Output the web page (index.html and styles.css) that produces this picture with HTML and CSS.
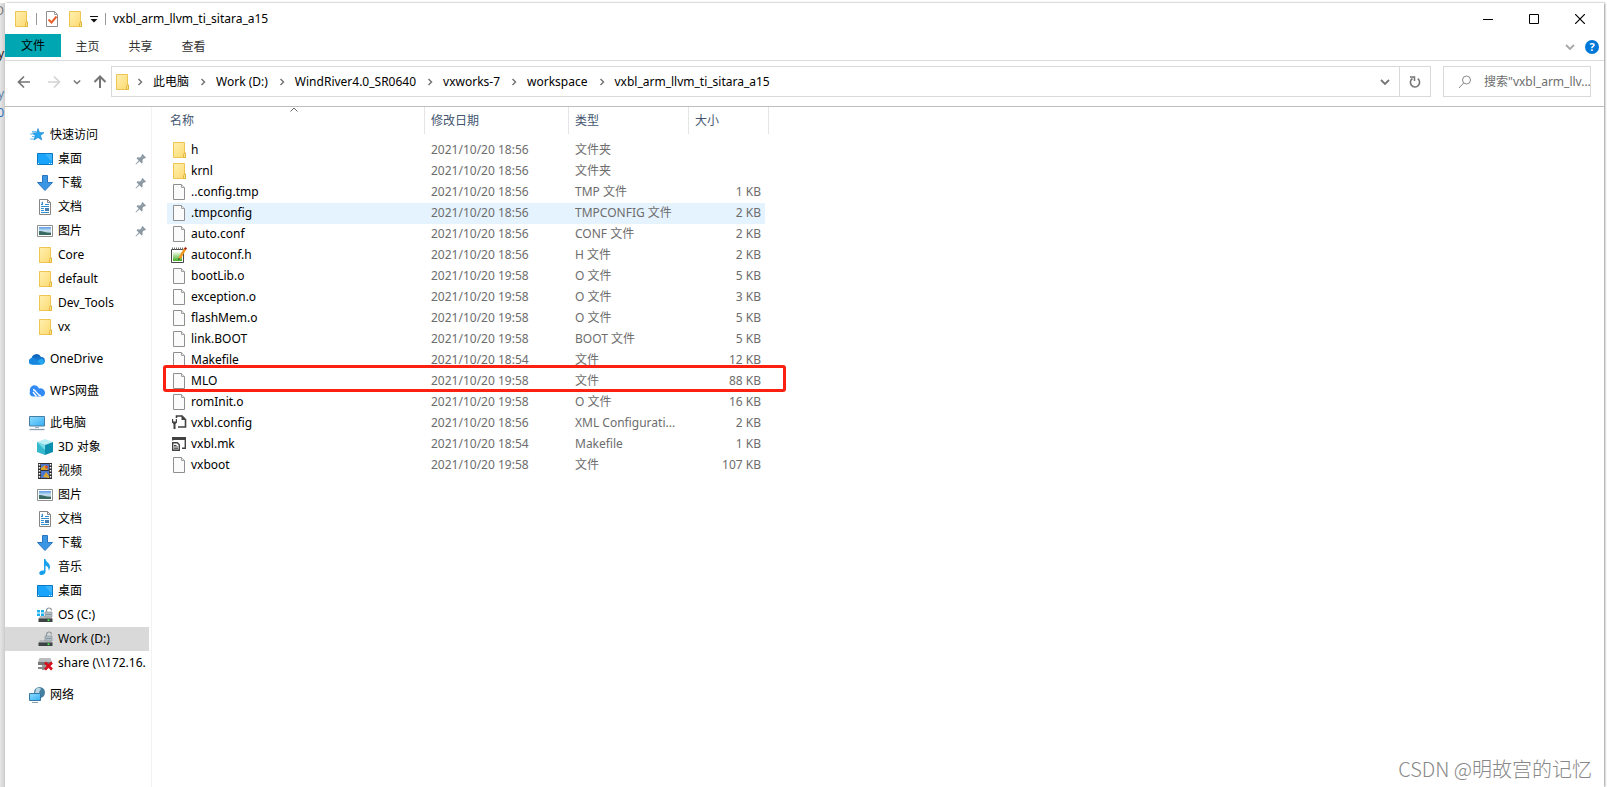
FILE: index.html
```html
<!DOCTYPE html>
<html lang="zh-CN">
<head>
<meta charset="utf-8">
<title>vxbl_arm_llvm_ti_sitara_a15</title>
<link rel="stylesheet" href="styles.css">
</head>
<body>
<svg class="sprite" aria-hidden="true">
  <defs>
    <linearGradient id="g-folder" x1="0" y1="0" x2="1" y2="1"><stop offset="0" stop-color="#fff0b0"/><stop offset="1" stop-color="#fcd970"/></linearGradient>
    <linearGradient id="g-cloud" x1="0" y1="0" x2="0" y2="1"><stop offset="0" stop-color="#0a5cb8"/><stop offset="1" stop-color="#1f9bea"/></linearGradient>
    <linearGradient id="g-screen" x1="0" y1="0" x2="1" y2="1"><stop offset="0" stop-color="#8fdcff"/><stop offset="1" stop-color="#35aef2"/></linearGradient>
    <linearGradient id="g-pic" x1="0" y1="0" x2="0" y2="1"><stop offset="0" stop-color="#5b9be6"/><stop offset=".5" stop-color="#cfe6f5"/><stop offset="1" stop-color="#3d6b6b"/></linearGradient>
    <linearGradient id="g-note" x1="0" y1="0" x2="0" y2="1"><stop offset="0" stop-color="#f4fbe8"/><stop offset="1" stop-color="#3fae1f"/></linearGradient>
  </defs>
  <symbol id="folder" viewBox="0 0 16 16"><path d="M2.500.5h11v10.500h1v4.500h-12z" fill="url(#g-folder)" stroke="#ecc552"/><path d="M12.500 15.500v-3l1-1.500h1v4.500z" fill="#fde58f" stroke="#e3b53c"/></symbol>
  <symbol id="file" viewBox="0 0 16 16"><path d="M2.500.5h8l3 3v12h-11z" fill="#fbfbfb" stroke="#8f8f8f"/><path d="M10.500.5v3h3" fill="#e8e8e8" stroke="#a0a0a0"/></symbol>
  <symbol id="check" viewBox="0 0 16 16"><path d="M2.500.5h8l3 3v12h-11z" fill="#fff" stroke="#8f8f8f"/><path d="M10.500.5v3h3" fill="none" stroke="#a0a0a0"/><path d="M4.500 8.500l3 3 5-6" fill="none" stroke="#e8602c" stroke-width="2"/></symbol>
  <symbol id="notepad" viewBox="0 0 16 16"><path d="M.5 2.500h12v13H.5z" fill="#fff" stroke="#444"/><path d="M2 5h9v9H2z" fill="url(#g-note)"/><path d="M1 1.500h11" stroke="#777" stroke-width="2" stroke-dasharray="1 1"/><path d="M14 2L8.500 11.500" stroke="#ed9a1e" stroke-width="2.500"/><path d="M14.200 0L16 1.200 14.800 3 13 1.800z" fill="#a41414"/><path d="M7.200 13l.3-2 1.700 1z" fill="#333"/></symbol>
  <symbol id="wrench" viewBox="0 0 16 16"><path d="M5.500 3V1h5.500l3.500 3.500V12H7" fill="none" stroke="#424242" stroke-width="1.600"/><path d="M10.500 0v5H15z" fill="#424242"/><path d="M1 4v3.500L2.500 9v5h2V9L6 7.500V4H4.800v2.500H2.200V4z" fill="#424242"/></symbol>
  <symbol id="make" viewBox="0 0 16 16"><path d="M1 1h14v3H1z" fill="#424242"/><path d="M1.700 3v1.500M14.300 3v9.300H11" fill="none" stroke="#424242" stroke-width="1.400"/><path d="M1.700 6.700h4.600l2 2v5.600H1.700z" fill="#fff" stroke="#424242" stroke-width="1.400"/><path d="M3 9.500h2.500M3 11h4M3 12.700h4" stroke="#424242"/></symbol>
  <symbol id="star" viewBox="0 0 16 16"><path d="M9 1.500l1.500 4 4.500.2-3.500 2.800 1.300 4.500L9 10.500 4.800 13l1.500-4.300L3.300 6l4.200-.3z" fill="#27a5ee" stroke="#1580c8" stroke-width=".6"/><path d="M3 4.500h4M1 7h4M3 9.500h3M1 12h4" stroke="#66bdf0"/></symbol>
  <symbol id="desktop" viewBox="0 0 16 16"><path d="M.5 2.500h15v11H.5z" fill="#1ba4fb" stroke="#0b78c4"/><path d="M8 3h7v8z" fill="#3db4ff"/><path d="M1 12.500h2M12 12.500h3" stroke="#d8f0ff" stroke-dasharray="1 1"/></symbol>
  <symbol id="down" viewBox="0 0 16 16"><path d="M5.500.5h5v7h5L8 15.500.5 7.500h5z" fill="#3b96e4" stroke="#2676c2"/></symbol>
  <symbol id="doc" viewBox="0 0 16 16"><path d="M2.500.5h8l3 3v12h-11z" fill="#fff" stroke="#858585"/><path d="M10.500.5v3h3" fill="none" stroke="#858585"/><path d="M4 5.500h2M8 5.500h4M4 7.500h8M4 9.500h3M4 11.500h3M4 13.500h8" stroke="#2f8fd0"/><path d="M8 9h4v3H8z" fill="#477fae"/><path d="M4 4l2-1.500v3z" fill="#2f8fd0"/></symbol>
  <symbol id="picture" viewBox="0 0 16 16"><path d="M.5 2.500h15v11H.5z" fill="#fff" stroke="#8f8f8f"/><path d="M2 4h12v8H2z" fill="url(#g-pic)"/><path d="M2 8c4 0 7 2 12 2v2H2z" fill="#396a63"/></symbol>
  <symbol id="onedrive" viewBox="0 0 16 16"><path d="M3 13.500a3 3 0 0 1-.5-6A5 5 0 0 1 12 6a3.800 3.800 0 0 1 1 7.500z" fill="url(#g-cloud)"/><path d="M3 13.500L12.500 7.500a3.500 3.500 0 0 1 1 6z" fill="#27a6f0"/><path d="M.5 9A3 3 0 0 1 5 7.200l7 6.300H3A3.500 3.500 0 0 1 .5 9z" fill="#1787df"/></symbol>
  <symbol id="wps" viewBox="0 0 16 16"><path d="M1 8.500A4.500 4.500 0 0 1 10 5.500 4.500 4.500 0 0 1 16 10c0 2-1.500 3.500-3.500 3.500H4A3.500 3.500 0 0 1 1 8.500z" fill="#338bf5"/><path d="M4 6.500c3 0 4 6 8 6.500M7.500 13.500L4 9" fill="none" stroke="#fff" stroke-width="1.300"/></symbol>
  <symbol id="pc" viewBox="0 0 16 16"><path d="M.5 1.500h15v9.500H.5z" fill="url(#g-screen)" stroke="#477fa4"/><path d="M6 12.500h4" stroke="#9ab" /><path d="M.5 14.500h15" stroke="#8aa0ae" stroke-width="1.300"/></symbol>
  <symbol id="cube" viewBox="0 0 16 16"><path d="M8 0l8 3-8 3-8-3z" fill="#bdeef4"/><path d="M0 3l8 3v10l-8-3z" fill="#35b8cd"/><path d="M16 3L8 6v10l8-3z" fill="#0b8fae"/><path d="M0 3l8 3v5z" fill="#79dbe5"/></symbol>
  <symbol id="video" viewBox="0 0 16 16"><path d="M1 0h14v16H1z" fill="#303030"/><path d="M2.500 1v14M13.500 1v14" stroke="#fff" stroke-width="1.500" stroke-dasharray="1.500 1.500"/><path d="M4 1h8v6H4zM4 8h8v7H4z" fill="#4c77d0"/><path d="M4 5l4-3 3 5H4zM6 14l3-5 3 4v2z" fill="#d9a62e"/><circle cx="9.500" cy="4" r="1.500" fill="#d64a2d"/></symbol>
  <symbol id="music" viewBox="0 0 16 16"><path d="M7 0h1.500c0 3 5 4 4.500 8.500-.3 1.500-1 2.500-1.500 3 .5-3-1-4.300-3-5V12.500C8.500 15 6 16 4.500 16 2 16 1.800 13.500 3 12.500c1-1 2.500-1.300 4-1z" fill="#169fec"/></symbol>
  <symbol id="drive" viewBox="0 0 16 16"><path d="M3 9h11l1.500 3H1.500z" fill="#b8babb"/><path d="M1.500 11.500h14V15h-14z" fill="#3d4245"/><circle cx="11.500" cy="13.300" r="1" fill="#49f04c"/><path d="M8 5h7v5H8z" fill="#b4bdc2" stroke="#89959c" stroke-width=".7"/><path d="M9.500 5V3.500a2.500 2.500 0 0 1 5 0" fill="none" stroke="#8c979d" stroke-width="1.200"/><path d="M8.500 7.500h6" stroke="#7c99ad"/></symbol>
  <symbol id="winlogo" viewBox="0 0 16 16"><path d="M0 3h3v2.500H0zM4 3h3v2.500H4zM0 6.500h3V9H0zM4 6.500h3V9H4z" fill="#1ab0ee"/></symbol>
  <symbol id="share" viewBox="0 0 16 16"><path d="M2.500 3h11l1.500 4H1z" fill="#b9bcbe"/><path d="M1 7h14v3H1z" fill="#777"/><path d="M5 10h5v5H5z" fill="#9d9d9d"/><path d="M1 13h8" stroke="#888" stroke-width="2"/><path d="M8 7.500l7 7M15 7.500l-7 7" stroke="#d9101d" stroke-width="2.600"/></symbol>
  <symbol id="network" viewBox="0 0 16 16"><circle cx="10.500" cy="5.500" r="5.500" fill="#477f9f"/><path d="M7 2c2-2 4-1 5 0l-2 3 2 3-3 1-3-3z" fill="#b7d5e3"/><path d="M.5 6.500h11v7H.5z" fill="url(#g-screen)" stroke="#3479a5"/><path d="M3 15.500h6" stroke="#8aa0ae"/></symbol>
  <symbol id="pin" viewBox="0 0 12 12"><path d="M7.500 1L11 4.500 10 5.500 9 5.300 7.500 7l.2 2.500-1 1L4.500 8.300 1 11.500l-.5-.5L3.700 7.500 1.500 5.300l1-1L5 4.500 6.700 3 6.500 2z" fill="#8d99a2"/></symbol>
  <symbol id="chev-r" viewBox="0 0 8 8"><path d="M2.500 1l3 3-3 3" fill="none" stroke="#777" stroke-width="1.500"/></symbol>
  <symbol id="chev-d" viewBox="0 0 10 10"><path d="M1 3l4 4 4-4" fill="none" stroke="currentColor" stroke-width="1.800"/></symbol>
  <symbol id="arrow" viewBox="0 0 14 14"><path d="M13 7H2M7 1.500L1.500 7 7 12.500" fill="none" stroke="currentColor" stroke-width="1.700"/></symbol>
  <symbol id="arrow-up" viewBox="0 0 14 14"><path d="M7 13V2M1.500 7L7 1.500 12.500 7" fill="none" stroke="currentColor" stroke-width="2"/></symbol>
</svg>

<div class="desk">
  <div class="behind" aria-hidden="true">
    <span class="frag frag-title">D</span><span class="frag frag-dark">y</span><span class="frag frag-blue">y</span><span class="frag frag-link">20</span>
  </div>
  <main class="window">
    <header class="titlebar">
      <svg class="i16"><use href="#folder"/></svg>
      <span class="bar"></span>
      <button class="plain" aria-label="属性"><svg class="i16"><use href="#check"/></svg></button>
      <button class="plain" aria-label="新建文件夹"><svg class="i16"><use href="#folder"/></svg></button>
      <button class="plain" aria-label="自定义快速访问工具栏"><svg class="i8" viewBox="0 0 8 8"><path d="M0 1.500h8" stroke="#111"/><path d="M.5 4h7L4 7.500z" fill="#111"/></svg></button>
      <span class="bar"></span>
      <h1 class="title">vxbl_arm_llvm_ti_sitara_a15</h1>
      <div class="controls">
        <button class="control" aria-label="最小化"><svg class="i10" viewBox="0 0 10 10"><path d="M0 5.500h10" stroke="#000"/></svg></button>
        <button class="control" aria-label="最大化"><svg class="i10" viewBox="0 0 10 10"><path d="M.5.5h9v9h-9z" fill="none" stroke="#000"/></svg></button>
        <button class="control" aria-label="关闭"><svg class="i10" viewBox="0 0 10 10"><path d="M0 0l10 10M10 0L0 10" stroke="#000" stroke-width="1.200"/></svg></button>
      </div>
    </header>

    <nav class="tabs">
      <button class="tab tab-file">文件</button>
      <button class="tab">主页</button>
      <button class="tab">共享</button>
      <button class="tab">查看</button>
      <div class="tabs-end">
        <button class="plain pale" aria-label="展开功能区"><svg class="i10"><use href="#chev-d"/></svg></button>
        <button class="help" aria-label="帮助">?</button>
      </div>
    </nav>

    <div class="toolbar">
      <div class="history">
        <button class="plain grey" aria-label="后退"><svg class="i14"><use href="#arrow"/></svg></button>
        <button class="plain light flip" aria-label="前进"><svg class="i14"><use href="#arrow"/></svg></button>
        <button class="plain grey" aria-label="最近位置"><svg class="i8"><use href="#chev-d"/></svg></button>
        <button class="plain grey" aria-label="上移"><svg class="i14"><use href="#arrow-up"/></svg></button>
      </div>
      <div class="address">
        <svg class="i16 address-icon"><use href="#folder"/></svg>
        <svg class="sep sep-first"><use href="#chev-r"/></svg><button class="crumb">此电脑</button>
        <svg class="sep"><use href="#chev-r"/></svg><button class="crumb">Work (D:)</button>
        <svg class="sep"><use href="#chev-r"/></svg><button class="crumb">WindRiver4.0_SR0640</button>
        <svg class="sep"><use href="#chev-r"/></svg><button class="crumb">vxworks-7</button>
        <svg class="sep"><use href="#chev-r"/></svg><button class="crumb">workspace</button>
        <svg class="sep"><use href="#chev-r"/></svg><button class="crumb">vxbl_arm_llvm_ti_sitara_a15</button>
        <button class="plain grey drop" aria-label="以前的位置"><svg class="i10"><use href="#chev-d"/></svg></button>
        <button class="plain grey refresh" aria-label="刷新"><svg class="i12" viewBox="0 0 12 12"><path d="M3.500 2.500A4.600 4.600 0 1 0 8.800 2.700" fill="none" stroke="currentColor" stroke-width="1.600"/><path d="M1 1h4.500v4" fill="none" stroke="currentColor" stroke-width="1.500"/></svg></button>
      </div>
      <label class="search">
        <svg class="i14" viewBox="0 0 14 14"><circle cx="8.500" cy="5" r="4" fill="none" stroke="#888"/><path d="M5.700 8L1 13" stroke="#888"/></svg>
        <input class="search-input" type="text" aria-label="搜索" placeholder="搜索&quot;vxbl_arm_llv...">
      </label>
    </div>

    <div class="content">
      <nav class="sidebar">
        <a class="node root" href="#"><svg class="i16"><use href="#star"/></svg>快速访问</a>
        <a class="node" href="#"><svg class="i16"><use href="#desktop"/></svg>桌面<svg class="pin"><use href="#pin"/></svg></a>
        <a class="node" href="#"><svg class="i16"><use href="#down"/></svg>下载<svg class="pin"><use href="#pin"/></svg></a>
        <a class="node" href="#"><svg class="i16"><use href="#doc"/></svg>文档<svg class="pin"><use href="#pin"/></svg></a>
        <a class="node" href="#"><svg class="i16"><use href="#picture"/></svg>图片<svg class="pin"><use href="#pin"/></svg></a>
        <a class="node" href="#"><svg class="i16"><use href="#folder"/></svg>Core</a>
        <a class="node" href="#"><svg class="i16"><use href="#folder"/></svg>default</a>
        <a class="node" href="#"><svg class="i16"><use href="#folder"/></svg>Dev_Tools</a>
        <a class="node" href="#"><svg class="i16"><use href="#folder"/></svg>vx</a>
        <a class="node root" href="#"><svg class="i16"><use href="#onedrive"/></svg>OneDrive</a>
        <a class="node root" href="#"><svg class="i16"><use href="#wps"/></svg>WPS网盘</a>
        <a class="node root" href="#"><svg class="i16"><use href="#pc"/></svg>此电脑</a>
        <a class="node" href="#"><svg class="i16"><use href="#cube"/></svg>3D 对象</a>
        <a class="node" href="#"><svg class="i16"><use href="#video"/></svg>视频</a>
        <a class="node" href="#"><svg class="i16"><use href="#picture"/></svg>图片</a>
        <a class="node" href="#"><svg class="i16"><use href="#doc"/></svg>文档</a>
        <a class="node" href="#"><svg class="i16"><use href="#down"/></svg>下载</a>
        <a class="node" href="#"><svg class="i16"><use href="#music"/></svg>音乐</a>
        <a class="node" href="#"><svg class="i16"><use href="#desktop"/></svg>桌面</a>
        <a class="node" href="#"><svg class="i16"><use href="#drive"/><use href="#winlogo"/></svg>OS (C:)</a>
        <a class="node current" href="#"><svg class="i16"><use href="#drive"/></svg>Work (D:)</a>
        <a class="node" href="#"><svg class="i16"><use href="#share"/></svg>share (\\172.16.</a>
        <a class="node root" href="#"><svg class="i16"><use href="#network"/></svg>网络</a>
      </nav>

      <section class="pane">
        <table class="files">
          <colgroup><col class="c-name"><col class="c-date"><col class="c-type"><col class="c-size"></colgroup>
          <thead>
            <tr>
              <th class="sorted"><button class="sort">名称</button><svg class="sort-mark" viewBox="0 0 8 5"><path d="M.5 4.500L4 1l3.500 3.500" fill="none" stroke="#666"/></svg></th>
              <th><button class="sort">修改日期</button></th>
              <th><button class="sort">类型</button></th>
              <th><button class="sort">大小</button></th>
            </tr>
          </thead>
          <tbody>
            <tr><td><div class="name"><svg class="i16"><use href="#folder"/></svg>h</div></td><td>2021/10/20 18:56</td><td>文件夹</td><td></td></tr>
            <tr><td><div class="name"><svg class="i16"><use href="#folder"/></svg>krnl</div></td><td>2021/10/20 18:56</td><td>文件夹</td><td></td></tr>
            <tr><td><div class="name"><svg class="i16"><use href="#file"/></svg>..config.tmp</div></td><td>2021/10/20 18:56</td><td>TMP 文件</td><td>1 KB</td></tr>
            <tr class="hover"><td><div class="name"><svg class="i16"><use href="#file"/></svg>.tmpconfig</div></td><td>2021/10/20 18:56</td><td>TMPCONFIG 文件</td><td>2 KB</td></tr>
            <tr><td><div class="name"><svg class="i16"><use href="#file"/></svg>auto.conf</div></td><td>2021/10/20 18:56</td><td>CONF 文件</td><td>2 KB</td></tr>
            <tr><td><div class="name"><svg class="i16"><use href="#notepad"/></svg>autoconf.h</div></td><td>2021/10/20 18:56</td><td>H 文件</td><td>2 KB</td></tr>
            <tr><td><div class="name"><svg class="i16"><use href="#file"/></svg>bootLib.o</div></td><td>2021/10/20 19:58</td><td>O 文件</td><td>5 KB</td></tr>
            <tr><td><div class="name"><svg class="i16"><use href="#file"/></svg>exception.o</div></td><td>2021/10/20 19:58</td><td>O 文件</td><td>3 KB</td></tr>
            <tr><td><div class="name"><svg class="i16"><use href="#file"/></svg>flashMem.o</div></td><td>2021/10/20 19:58</td><td>O 文件</td><td>5 KB</td></tr>
            <tr><td><div class="name"><svg class="i16"><use href="#file"/></svg>link.BOOT</div></td><td>2021/10/20 19:58</td><td>BOOT 文件</td><td>5 KB</td></tr>
            <tr><td><div class="name"><svg class="i16"><use href="#file"/></svg>Makefile</div></td><td>2021/10/20 18:54</td><td>文件</td><td>12 KB</td></tr>
            <tr class="marked"><td><div class="name"><svg class="i16"><use href="#file"/></svg>MLO</div><span class="mark"></span></td><td>2021/10/20 19:58</td><td>文件</td><td>88 KB</td></tr>
            <tr><td><div class="name"><svg class="i16"><use href="#file"/></svg>romInit.o</div></td><td>2021/10/20 19:58</td><td>O 文件</td><td>16 KB</td></tr>
            <tr><td><div class="name"><svg class="i16"><use href="#wrench"/></svg>vxbl.config</div></td><td>2021/10/20 18:56</td><td>XML Configurati...</td><td>2 KB</td></tr>
            <tr><td><div class="name"><svg class="i16"><use href="#make"/></svg>vxbl.mk</div></td><td>2021/10/20 18:54</td><td>Makefile</td><td>1 KB</td></tr>
            <tr><td><div class="name"><svg class="i16"><use href="#file"/></svg>vxboot</div></td><td>2021/10/20 19:58</td><td>文件</td><td>107 KB</td></tr>
          </tbody>
        </table>
      </section>
    </div>
    <p class="watermark">CSDN @明故宫的记忆</p>
  </main>
</div>
</body>
</html>
```
FILE: styles.css
```css
* { box-sizing: border-box; }

body {
  margin: 0;
  background: #fff;
  color: #000;
  font: 12px/16px "Noto Sans", "Noto Sans CJK SC", sans-serif;
}

button {
  margin: 0;
  padding: 0;
  border: 0;
  background: none;
  color: inherit;
  font: inherit;
}

svg { flex: none; display: block; }
.sprite { position: absolute; width: 0; height: 0; }
.i8 { width: 8px; height: 8px; }
.i10 { width: 10px; height: 10px; }
.i12 { width: 12px; height: 12px; }
.i14 { width: 14px; height: 14px; }
.i16 { width: 16px; height: 16px; }
.plain { display: flex; align-items: center; justify-content: center; }
.grey { color: #757575; }
.light { color: #d4d4d4; }
.pale { color: #a6a6a6; }
.flip { transform: scaleX(-1); }

.desk {
  display: flex;
  min-height: 100vh;
  padding-top: 3px;
}

/* Sliver of the window that lies behind this one */
.behind {
  position: relative;
  width: 5px;
  overflow: hidden;
  background: linear-gradient(90deg, #e6e6e6, #cfcfcf);
}
.frag { position: absolute; right: 1px; }
.frag-title { top: 0; color: #777; }
.frag-dark { top: 43px; color: #222; }
.frag-blue { top: 83px; color: #5a7fa8; }
.frag-link { top: 102px; color: #2f6fc0; }

.window {
  position: relative;
  flex: 1;
  display: flex;
  flex-direction: column;
  min-width: 0;
  margin-right: 3px;
  background: #fff;
  box-shadow: 1px 0 2px #999;
}

.titlebar {
  display: flex;
  align-items: center;
  height: 31px;
  padding-left: 8px;
  gap: 7px;
}
.bar { width: 1px; height: 12px; background: #999; }
.title { margin: 0; font-size: 12px; font-weight: 400; }
.controls { display: flex; margin: 0 1px 0 auto; }
.control { display: flex; align-items: center; justify-content: center; width: 46px; height: 30px; }

.tabs {
  display: flex;
  height: 27px;
  border-bottom: 1px solid #dadbdc;
  color: #333;
}
.tab { width: 53px; height: 25px; }
.tab-file { width: 56px; height: 23px; background: #00a6b2; color: #000; }
.tabs-end { display: flex; align-items: center; gap: 10px; margin-left: auto; padding-right: 5px; }
.help {
  width: 14px;
  height: 14px;
  border-radius: 50%;
  background: #0078d7;
  color: #fff;
  font-size: 11px;
  font-weight: 700;
  line-height: 14px;
}

.toolbar {
  display: flex;
  gap: 12px;
  height: 46px;
  padding: 5px 13px 9px 12px;
  border-bottom: 1px solid #bebebe;
}
.history { display: flex; align-items: center; gap: 12px; width: 82px; }
.history .flip { margin-left: 4px; }
.address { display: flex; flex: 1; align-items: stretch; border: 1px solid #d9d9d9; min-width: 0; }
.address svg { align-self: center; }
.address-icon { margin-left: 2px; }
.sep { width: 8px; height: 8px; margin: 0 9px 0 10px; }
.sep-first { margin-left: 6px; }
.drop { width: 28px; margin-left: auto; }
.refresh { width: 31px; border-left: 1px solid #d9d9d9; }
.search { display: flex; align-items: center; gap: 12px; width: 148px; padding-left: 14px; border: 1px solid #d9d9d9; }
.search-input { flex: 1; min-width: 0; padding: 0; border: 0; outline: 0; background: none; font: inherit; }
.search-input::placeholder { color: #6d6d6d; opacity: 1; }

.content { display: flex; flex: 1; }
.sidebar {
  width: 147px;
  padding: 16px 2px 0 0;
  border-right: 1px solid #f2f2f2;
}
.node {
  display: flex;
  align-items: center;
  gap: 5px;
  height: 24px;
  padding-left: 32px;
  overflow: hidden;
  color: #000;
  text-decoration: none;
  white-space: nowrap;
}
.root { padding-left: 24px; }
.node + .root { margin-top: 8px; }
.current { background: #d9d9d9; }
.pin { width: 12px; height: 12px; margin: 0 2px 0 auto; }

.pane { flex: 1; padding-left: 15px; }
.files { width: 602px; border-collapse: separate; border-spacing: 0; table-layout: fixed; }
.c-name { width: 258px; }
.c-date { width: 144px; }
.c-type { width: 120px; }
.c-size { width: 80px; }
.files th {
  position: relative;
  height: 27px;
  padding: 0 6px;
  border-right: 1px solid #e5e5e5;
  color: #44566f;
  font-weight: 400;
  text-align: left;
}
.files th.sorted { padding-left: 3px; }
.sort-mark { position: absolute; top: 0; left: 50%; width: 8px; height: 5px; margin-left: -6px; }
.files thead::after { content: ""; display: block; height: 6px; }
.files td { height: 21px; padding: 2px 6px 3px; color: #6d6d6d; vertical-align: top; white-space: nowrap; }
.files td:first-child { padding-left: 4px; color: #000; }
.files td:last-child { padding-right: 4px; border-right: 4px solid #fff; text-align: right; }
.name { display: flex; align-items: center; gap: 4px; }
.hover td { background: #e5f3ff; }
.marked { position: relative; }
.mark {
  position: absolute;
  top: -6px;
  right: -17px;
  bottom: 0;
  left: -4px;
  border: 3px solid #fb2010;
  border-radius: 3px;
}

.watermark {
  position: absolute;
  right: 12px;
  bottom: 6px;
  margin: 0;
  color: #888;
  font-family: "Noto Sans CJK SC", sans-serif;
  font-size: 20px;
  font-weight: 300;
  line-height: 24px;
}
```
